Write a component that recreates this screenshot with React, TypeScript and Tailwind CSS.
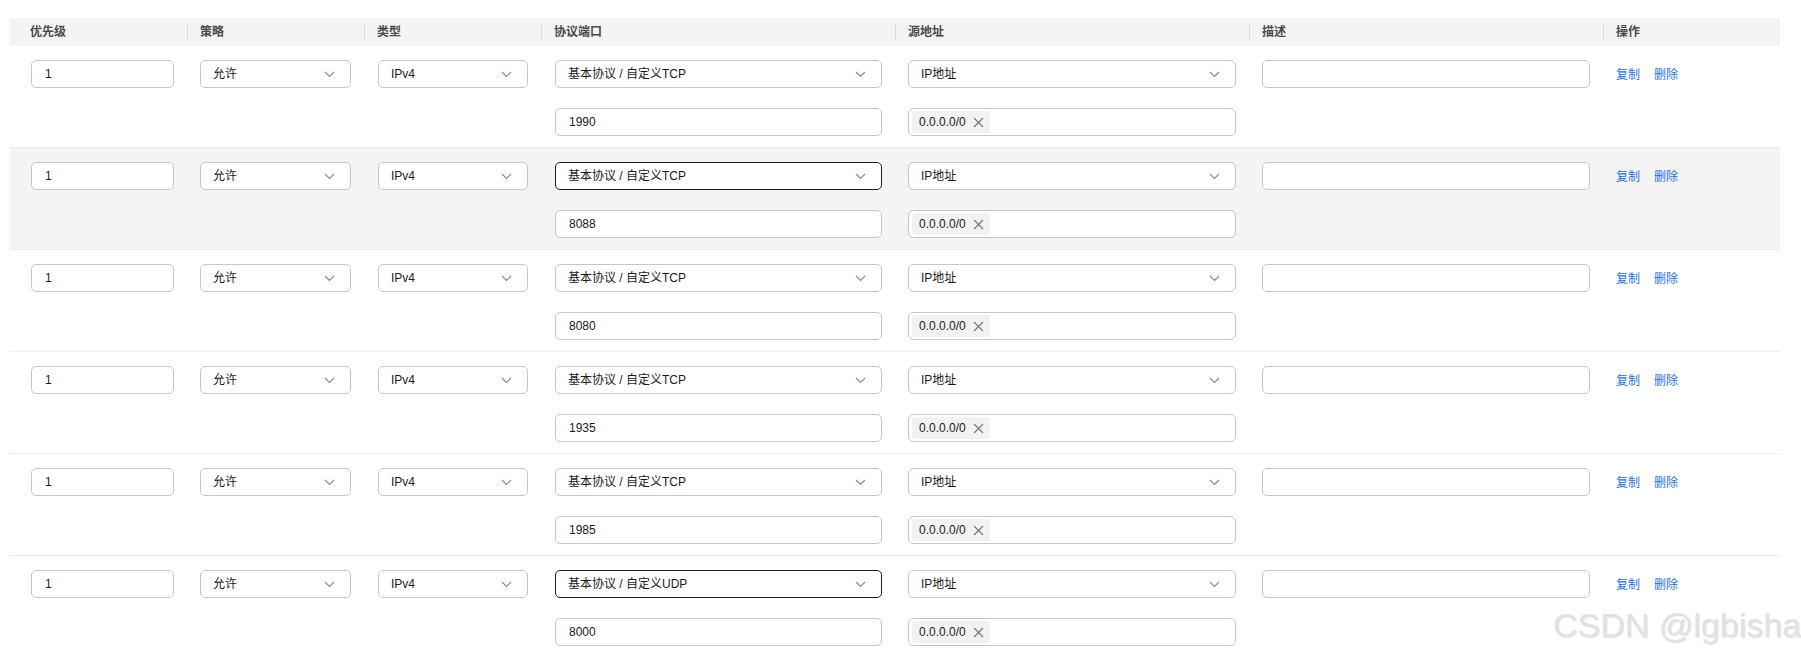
import React from "react";

const rows = [
  { port: "1990", proto: "TCP", active: false, hover: false },
  { port: "8088", proto: "TCP", active: true, hover: true },
  { port: "8080", proto: "TCP", active: false, hover: false },
  { port: "1935", proto: "TCP", active: false, hover: false },
  { port: "1985", proto: "TCP", active: false, hover: false },
  { port: "8000", proto: "UDP", active: true, hover: false },
];

const headers = ["优先级", "策略", "类型", "协议端口", "源地址", "描述", "操作"];

function Chevron() {
  return (
    <svg width="11" height="7" viewBox="0 0 11 7" className="shrink-0">
      <polyline points="1,1 5.5,5.5 10,1" fill="none" stroke="#8a8a8a" strokeWidth="1.2" />
    </svg>
  );
}

function Select({ value, active }: { value: string; active?: boolean }) {
  return (
    <div
      className={
        active
          ? "h-[28px] w-full rounded-[5px] border border-[#1f1f1f] bg-white pl-[12px] pr-[15px] flex items-center justify-between"
          : "h-[28px] w-full rounded-[5px] border border-[#c6c6c6] bg-white pl-[12px] pr-[15px] flex items-center justify-between"
      }
    >
      <span className="text-[12px] text-[#1a1a1a]">{value}</span>
      <Chevron />
    </div>
  );
}

function Input({ value }: { value?: string }) {
  return (
    <div className="h-[28px] w-full rounded-[5px] border border-[#c6c6c6] bg-white px-[13px] flex items-center">
      <span className="text-[12px] text-[#1a1a1a]">{value}</span>
    </div>
  );
}

function TagInput() {
  return (
    <div className="h-[28px] w-full rounded-[5px] border border-[#c6c6c6] bg-white pl-[3px] flex items-center">
      <div className="h-[22px] rounded-[3px] bg-[#f2f2f2] pl-[7px] pr-[6px] flex items-center gap-[7px]">
        <span className="text-[12px] text-[#1a1a1a]">0.0.0.0/0</span>
        <svg width="11" height="11" viewBox="0 0 11 11">
          <path d="M1 1 L10 10 M10 1 L1 10" stroke="#7a7a7a" strokeWidth="1.2" />
        </svg>
      </div>
    </div>
  );
}

export default function App() {
  return (
    <div
      className="relative w-full h-[652px] overflow-hidden bg-white"
      style={{ fontFamily: '"Liberation Sans", "Noto Sans CJK SC", sans-serif' }}
    >
      <div className="ml-[10px] mt-[18px] w-[1770px]">
        <div className="grid grid-cols-[177px_177px_177px_354px_354px_354px_177px] h-[28px] bg-[#f4f4f4]">
          {headers.map((h, i) => (
            <div key={h} className="flex items-center">
              {i === 0 ? (
                <span className="pl-[20px] text-[12px] font-bold text-[#4a4a4a]">{h}</span>
              ) : (
                <>
                  <div className="w-px h-[16px] bg-[#dcdcdc]" />
                  <span className="pl-[12px] text-[12px] font-bold text-[#4a4a4a]">{h}</span>
                </>
              )}
            </div>
          ))}
        </div>
        {rows.map((r, idx) => (
          <div
            key={idx}
            className={
              r.hover
                ? "grid grid-cols-[177px_177px_177px_354px_354px_354px_177px] pt-[14px] pb-[11px] border-b border-[#ececec] bg-[#f4f4f4]"
                : "grid grid-cols-[177px_177px_177px_354px_354px_354px_177px] pt-[14px] pb-[11px] border-b border-[#ececec] bg-white"
            }
          >
            <div className="pl-[21px] pr-[13px]">
              <Input value="1" />
            </div>
            <div className="pl-[13px] pr-[13px]">
              <Select value="允许" />
            </div>
            <div className="pl-[14px] pr-[13px]">
              <Select value="IPv4" />
            </div>
            <div className="pl-[14px] pr-[13px] flex flex-col gap-[20px]">
              <Select value={`基本协议 / 自定义${r.proto}`} active={r.active} />
              <Input value={r.port} />
            </div>
            <div className="pl-[13px] pr-[13px] flex flex-col gap-[20px]">
              <Select value="IP地址" />
              <TagInput />
            </div>
            <div className="pl-[13px] pr-[13px]">
              <Input />
            </div>
            <div className="pl-[13px] pt-[2px] h-[28px] flex items-center gap-[14px]">
              <span className="text-[12px] text-[#1d6ff2]">复制</span>
              <span className="text-[12px] text-[#1d6ff2]">删除</span>
            </div>
          </div>
        ))}
      </div>
      <div className="absolute left-[1553px] top-[600px] whitespace-nowrap text-[34px] text-[#e2e2e2] [text-shadow:1px_1px_1px_rgba(0,0,0,0.12)]">
        CSDN @lgbisha
      </div>
    </div>
  );
}
